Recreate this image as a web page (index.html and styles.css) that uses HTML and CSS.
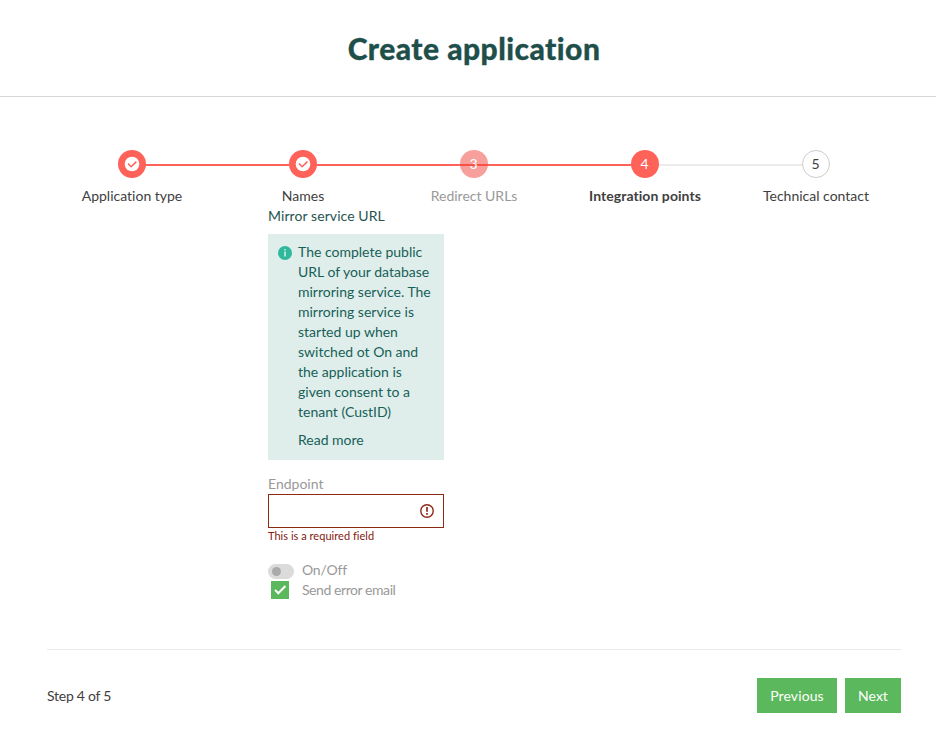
FILE: index.html
```html
<!DOCTYPE html>
<html lang="en">
<head>
<meta charset="utf-8">
<title>Create application</title>
<link rel="stylesheet" href="styles.css">
</head>
<body>
<header class="header"><h1>Create application</h1></header>
<ol class="stepper">
  <li class="step done"><span class="dot"><svg width="16" height="16" viewBox="0 0 16 16"><circle cx="8" cy="8" r="7.3" fill="#fff"/><path d="M4 7.6l3.1 3.2 5.3-5.2" fill="none" stroke="#ff6259" stroke-width="1.5"/></svg></span><span class="label">Application type</span></li>
  <li class="step done"><span class="dot"><svg width="16" height="16" viewBox="0 0 16 16"><circle cx="8" cy="8" r="7.3" fill="#fff"/><path d="M4 7.6l3.1 3.2 5.3-5.2" fill="none" stroke="#ff6259" stroke-width="1.5"/></svg></span><span class="label">Names</span></li>
  <li class="step done disabled"><span class="dot">3</span><span class="label">Redirect URLs</span></li>
  <li class="step current"><span class="dot">4</span><span class="label">Integration points</span></li>
  <li class="step upcoming"><span class="dot">5</span><span class="label">Technical contact</span></li>
</ol>
<main class="form">
  <h2>Mirror service URL</h2>
  <section class="info">
    <svg class="info-icon" width="14" height="14" viewBox="0 0 14 14"><circle cx="7" cy="7" r="7" fill="#2fb89c"/><path d="M7 5.6v5M7 3v1.5" stroke="#fff" stroke-width="1.2"/></svg>
    <div><p>The complete public URL of your database mirroring service. The mirroring service is started up when switched ot On and the application is given consent to a tenant (CustID)</p><a class="more">Read more</a></div>
  </section>
  <label class="field-label">Endpoint</label>
  <div class="input"><svg width="14" height="14" viewBox="0 0 14 14"><circle cx="7" cy="7" r="6.2" fill="none" stroke="#8f2a1c" stroke-width="1.4"/><path d="M7 3v4.8M7 9v1.7" stroke="#8f2a1c" stroke-width="1.7"/></svg></div>
  <p class="error">This is a required field</p>
  <div class="option toggle-row"><span class="toggle"></span>On/Off</div>
  <div class="option email"><span class="check"><svg width="18" height="18" viewBox="0 0 18 18"><path d="M4 8.9l3.3 3.4L14.4 5" fill="none" stroke="#fff" stroke-width="2"/></svg></span>Send error email</div>
</main>
<footer class="footer"><span class="count">Step 4 of 5</span><div class="actions"><button class="previous">Previous</button><button>Next</button></div></footer>
</body>
</html>
```
FILE: styles.css
```css
* { box-sizing: border-box; }
body { margin: 0; background: #fff; color: #404040; font: 14px/20px Lato, sans-serif; font-variant-ligatures: none; }
h1, h2, p, ol { margin: 0; padding: 0; }
.header { height: 97px; border-bottom: 1px solid #d6d8d8; padding: 28px 0 0 12px; text-align: center; }
h1 { font-size: 30px; line-height: 40px; font-weight: 900; color: #1f4f4b; letter-spacing: 0.46px; -webkit-text-stroke: 0.3px #1f4f4b; }
.stepper { display: flex; list-style: none; margin: 53px 0 0 46px; width: 855px; }
.step { flex: 1; display: grid; grid-template-columns: 71px 28px 1fr; row-gap: 8px; align-items: center; text-align: center; }
.step::before, .step::after { content: ""; grid-row: 1; height: 2px; margin-top: 2px; background: #ff6259; }
.step::before { grid-column: 1; margin-right: -1px; }
.step::after { grid-column: 3; }
.step:first-child::before, .step:last-child::after { visibility: hidden; }
.current::after, .upcoming::before { background: #ebebeb; }
.dot { grid-column: 2; grid-row: 1; z-index: 1; width: 28px; height: 28px; margin-left: 0.5px; border-radius: 50%; background: #ff6259; color: #fff; display: flex; align-items: center; justify-content: center; }
.label { grid-column: 1 / 4; grid-row: 2; margin-left: 1px; }
.disabled::after { grid-column: 2 / 4; }
.disabled .dot { background: rgba(240, 64, 55, 0.5); }
.disabled .label { color: #999; }
.current .label { font-weight: 700; letter-spacing: 0.06px; }
.upcoming .dot { background: #fff; border: 1px solid #ccc; color: #404040; }
.form { width: 176px; margin-left: 268px; }
h2 { font: inherit; color: #265450; letter-spacing: 0.08px; }
.info { margin-top: 8px; height: 226px; background: #e0eeeb; color: #175f58; padding: 8px 10px; display: flex; gap: 6px; }
.info-icon { flex: none; margin-top: 4px; }
.more { display: block; margin-top: 8px; }
.field-label { display: block; margin-top: 14px; color: #999; }
.input { height: 34px; border: 1px solid #8f2a12; display: flex; align-items: center; justify-content: flex-end; padding-right: 9px; }
.error { font-size: 11px; line-height: 16px; color: #84200f; letter-spacing: 0.03px; }
.option { display: flex; align-items: center; height: 20px; color: #999; }
.email { letter-spacing: -0.43px; }
.toggle-row { margin-top: 16px; letter-spacing: -0.2px; }
.toggle { width: 26px; height: 15px; border-radius: 8px; background: #dbdbdb; margin: 3px 8px 0 0; padding: 3px 4px; }
.toggle::before { content: ""; display: block; width: 9px; height: 9px; border-radius: 50%; background: #aaa; }
.check { width: 18px; height: 18px; background: #5cb85c; margin: 0 13px 0 3px; }
.check svg { display: block; }
.footer { display: flex; justify-content: space-between; align-items: center; border-top: 1px solid #eaeaea; margin: 49px 35px 0 47px; padding-top: 28px; }
.count { letter-spacing: -0.25px; }
.actions { display: flex; gap: 8px; }
button { height: 35px; border: 0; background: #5cb85c; color: #fff; font: inherit; width: 56px; padding: 0; }
.previous { width: 80px; letter-spacing: 0.1px; }
```
